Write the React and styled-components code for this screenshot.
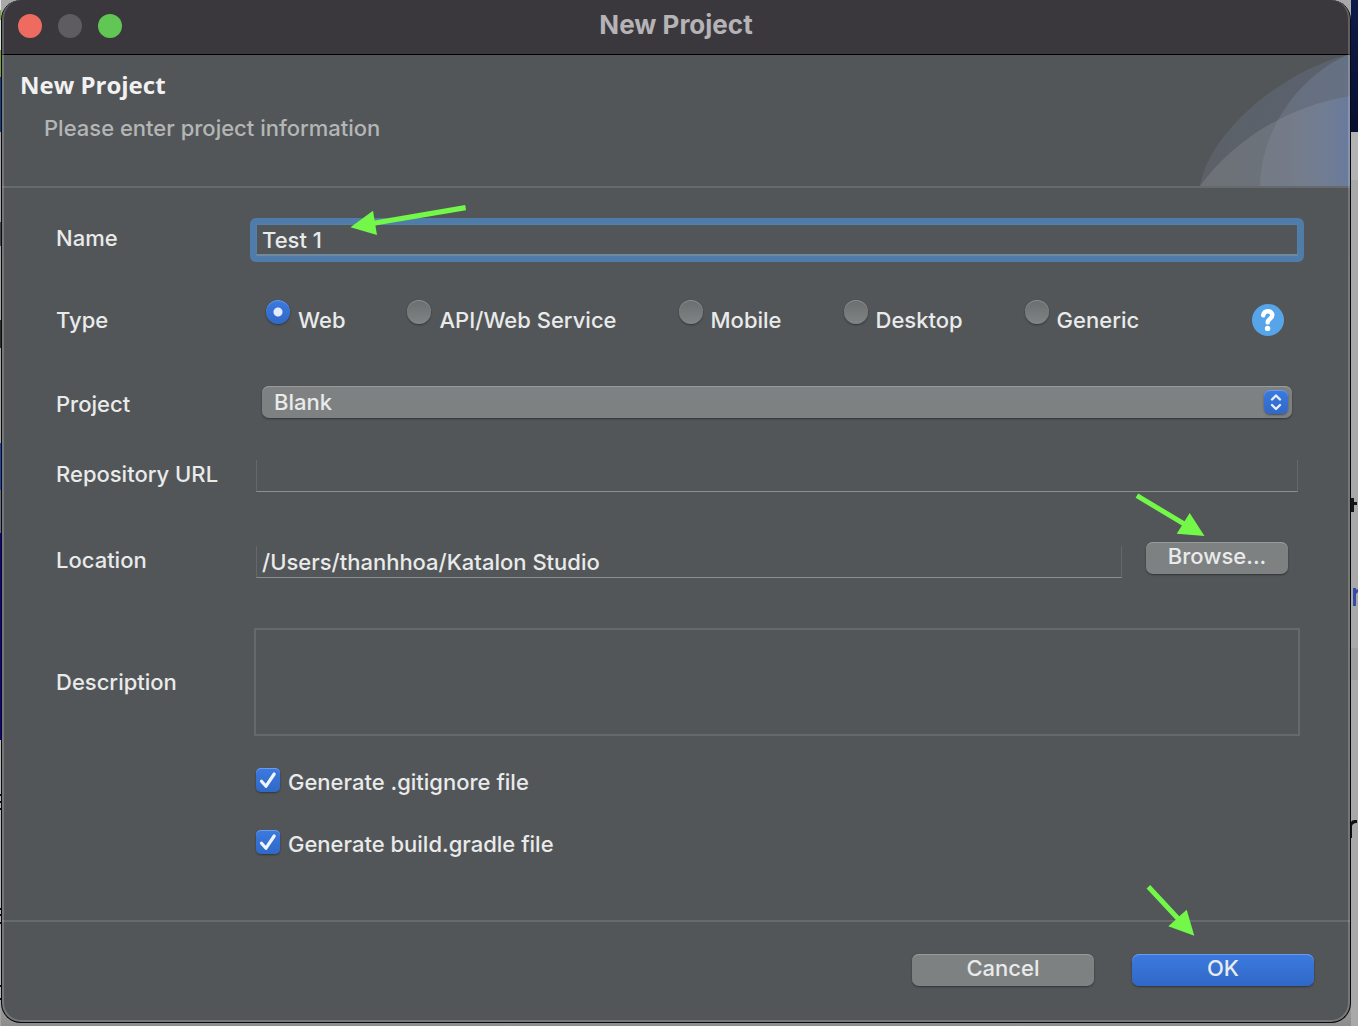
import React, { useState } from "react";
import styled, { createGlobalStyle, css } from "styled-components";

const GlobalStyle = createGlobalStyle`
  * {
    box-sizing: border-box;
  }
  body {
    margin: 0;
    background: #a4a4a4;
    font-family: Inter, "Liberation Sans", sans-serif;
    font-size: 22px;
    font-weight: 450;
    line-height: 28px;
    color: #e9eaea;
  }
  input,
  select,
  button,
  textarea {
    margin: 0;
    font: inherit;
    color: inherit;
  }
`;

const Desktop = styled.div`
  display: grid;
  grid-template-columns: 1px minmax(0, 1fr) 7px;
  min-height: 100vh;
  overflow: hidden;
  background: linear-gradient(to top, #8c8c8c, #a9a9a9 40px);
`;
const LeftEdge = styled.div`
  background: linear-gradient(
    #e4e4e4 10px,
    #78a640 10px 20px,
    #d5dcd5 20px 50px,
    #7ba03a 50px 77px,
    #14428f 77px 132px,
    #a4a4a4 132px 222px,
    #4a4a4a 222px 246px,
    #a4a4a4 246px 320px,
    #2c2c2c 320px 348px,
    #a4a4a4 348px 443px,
    #1e45b4 443px 490px,
    #666b82 490px 533px,
    #13009b 533px 740px,
    #b4b4b4 740px 794px,
    #111 794px 796px,
    #b4b4b4 796px 801px,
    #111 801px 803px,
    #b4b4b4 803px 808px,
    #111 808px 810px,
    #b4b4b4 810px 908px,
    #111 908px 910px,
    #b4b4b4 910px 914px,
    #111 914px 916px,
    #b4b4b4 916px 922px,
    #111 922px 924px,
    #b4b4b4 924px 985px,
    #111 985px 987px,
    #b4b4b4 987px 998px,
    #111 998px 1000px,
    #a4a4a4 1000px
  );
`;
const RightEdge = styled.div`
  background: linear-gradient(
    #0e1b4b,
    #080f30 132px,
    #b3b3b3 132px 180px,
    #a9a9a9 180px 648px,
    #9f9f9f 648px 680px,
    #a9a9a9 680px
  );
`;
const EdgeArt = styled.svg`
  display: block;
  width: 7px;
  height: 1000px;
`;

const Dialog = styled.main`
  position: relative;
  align-self: start;
  border: 1px solid #0a0a0a;
  border-top: 0;
  border-radius: 20px;
  overflow: hidden;
  background: #525658;
  &::after {
    content: "";
    position: absolute;
    inset: 0;
    border: 2px solid rgba(255, 255, 255, 0.2);
    border-top-width: 0;
    border-radius: 19px;
    pointer-events: none;
  }
`;

const TitleBar = styled.header`
  display: grid;
  grid-template-columns: 1fr auto 1fr;
  align-items: center;
  height: 55px;
  padding: 0 16px 3px;
  background: #3b383d;
  border-bottom: 1px solid #000;
`;
const Lights = styled.div`
  display: flex;
  gap: 16px;
`;
const Light = styled.button`
  width: 24px;
  height: 24px;
  padding: 0;
  border: 0;
  border-radius: 50%;
  background: ${(props) => props.$color};
`;
const WindowTitle = styled.div`
  padding-bottom: 2px;
  font-size: 26px;
  font-weight: 700;
  color: #b5b3b6;
`;

const Banner = styled.section`
  display: flex;
  justify-content: space-between;
  height: 133px;
  border-bottom: 2px solid #656a6c;
`;
const BannerText = styled.div`
  padding: 13px 18px;
`;
const Heading = styled.h1`
  margin: 0;
  font-family: "Open Sans", "Noto Sans", sans-serif;
  font-size: 24px;
  line-height: 34px;
  font-weight: 700;
  color: #f1f1f1;
`;
const Hint = styled.p`
  margin: 12px 0 0;
  padding-left: 24px;
  color: #b4b6b6;
`;
const BannerArt = styled.svg`
  display: block;
  width: 150px;
  height: 131px;
`;

const Form = styled.form`
  display: grid;
  grid-template-columns: 200px minmax(0, 1fr);
  grid-template-rows: 100px 64px 104px 36px 136px 108px 92px 32px;
  align-items: center;
  padding: 0 52px 60px 54px;
`;
const Label = styled.label`
  white-space: nowrap;
`;
const GroupLabel = styled.div``;

const TextInput = styled.input`
  display: block;
  flex: 1;
  min-width: 0;
  width: 100%;
  height: 32px;
  margin-top: ${(props) => (props.$focused ? 0 : 4)}px;
  padding: 0 5px;
  border: 1px solid #64686a;
  border-top: 0;
  border-bottom-color: #8b8f90;
  border-radius: 0;
  background: #525658;
  outline: none;
  ${(props) =>
    props.$focused &&
    css`
      border: 1px solid #5480a8;
      border-bottom: 2px solid #71899c;
      padding-top: 1px;
    `}
`;
const FocusRing = styled.div`
  position: relative;
  margin: 4px -6px 0;
  padding: 6px;
  border-radius: 6px;
  background: #4f7ca8;
`;

const Arrow = styled.svg`
  position: absolute;
  left: ${(props) => props.$left}px;
  bottom: ${(props) => props.$bottom}px;
  fill: #73f84a;
  pointer-events: none;
`;

const RadioRow = styled.div`
  display: flex;
  align-items: center;
  gap: 62px;
  padding: 0 14px 0 10px;
`;
const RadioLabel = styled.label`
  display: flex;
  align-items: flex-start;
  gap: 8px;
  line-height: 40px;
  white-space: nowrap;
`;
const Radio = styled.input`
  appearance: none;
  flex: none;
  width: 24px;
  height: 24px;
  border-radius: 50%;
  background: linear-gradient(#6b6e6f, #818485);
  box-shadow: inset 0 1px 0 #8a8d8e, 0 1px 2px rgba(0, 0, 0, 0.4);
  &:checked {
    background: radial-gradient(circle, #e3ebfa 4px, transparent 5px),
      linear-gradient(#3c7ae0, #3068c6);
    box-shadow: inset 0 1px 0 #6b9bea, 0 1px 2px rgba(0, 0, 0, 0.4);
  }
`;
const HelpButton = styled.button`
  flex: none;
  width: 32px;
  height: 32px;
  margin-left: auto;
  padding: 0;
  border: 0;
  border-radius: 50%;
  background: #55a5e8;
  svg {
    display: block;
  }
`;

const SelectWrap = styled.div`
  position: relative;
  margin: 0 6px 4px;
`;
const Select = styled.select`
  appearance: none;
  display: block;
  width: 100%;
  height: 32px;
  padding: 0 36px 0 12px;
  border: 0;
  border-radius: 7px;
  background: #7e8182;
  box-shadow: inset 0 1px 0 #999c9d, 0 1px 2px rgba(0, 0, 0, 0.4);
`;
const Stepper = styled.svg`
  position: absolute;
  right: 4px;
  top: 4px;
  width: 24px;
  height: 24px;
  border-radius: 6px;
  background: linear-gradient(#3c7ae0, #3068c6);
  box-shadow: inset 0 1px 0 #6b9bea, 0 1px 2px rgba(0, 0, 0, 0.4);
  pointer-events: none;
`;

const LocationRow = styled.div`
  display: flex;
  align-items: center;
  gap: 24px;
  padding-right: 10px;
`;
const ButtonWrap = styled.div`
  position: relative;
`;
const Button = styled.button`
  display: block;
  width: ${(props) => props.$width}px;
  height: 32px;
  padding: 0 0 4px;
  border: 0;
  border-radius: 7px;
  background: ${(props) =>
    props.$primary ? "linear-gradient(#3c7ae0, #3068c6)" : "#7e8182"};
  box-shadow: inset 0 1px 0 ${(props) => (props.$primary ? "#6b9bea" : "#999c9d")},
    0 1px 2px rgba(0, 0, 0, 0.4);
`;
const BrowseWrap = styled(ButtonWrap)`
  margin-bottom: 4px;
`;

const Description = styled.textarea`
  display: block;
  height: 108px;
  margin: 0 -2px;
  padding: 4px;
  border: 2px solid #65696b;
  background: transparent;
  outline: none;
  resize: none;
`;

const CheckLabel = styled.label`
  grid-column: 2;
  display: flex;
  align-items: center;
  gap: 8px;
`;
const CheckWrap = styled.span`
  position: relative;
  flex: none;
  height: 28px;
`;
const Checkbox = styled.input`
  appearance: none;
  display: block;
  width: 24px;
  height: 24px;
  border-radius: 5px;
  background: linear-gradient(#6b6e6f, #818485);
  box-shadow: inset 0 1px 0 #8a8d8e, 0 1px 2px rgba(0, 0, 0, 0.4);
  &:checked {
    background: linear-gradient(#3c7ae0, #3068c6);
    box-shadow: inset 0 1px 0 #6b9bea, 0 1px 2px rgba(0, 0, 0, 0.4);
  }
  &:not(:checked) + svg {
    display: none;
  }
`;
const Tick = styled.svg`
  position: absolute;
  left: 0;
  top: 0;
  pointer-events: none;
`;

const Footer = styled.footer`
  display: flex;
  justify-content: flex-end;
  gap: 38px;
  padding: 32px 36px 36px;
  border-top: 2px solid #656a6c;
`;

const types = ["Web", "API/Web Service", "Mobile", "Desktop", "Generic"];

const BannerCurves = () => (
  <BannerArt viewBox="0 0 150 131" aria-hidden="true">
    <defs>
      <linearGradient id="outer" x1="0" x2="1">
        <stop offset="0" stopColor="#8088a0" stopOpacity="0.22" />
        <stop offset="1" stopColor="#6f84b4" stopOpacity="0.26" />
      </linearGradient>
      <linearGradient id="inner" x1="0" x2="1">
        <stop offset="0" stopColor="#8c94a8" stopOpacity="0.24" />
        <stop offset="1" stopColor="#788ba8" stopOpacity="0.36" />
      </linearGradient>
      <linearGradient id="low" x1="0" x2="1">
        <stop offset="0" stopColor="#96999a" stopOpacity="0.3" />
        <stop offset="0.6" stopColor="#9498a2" stopOpacity="0.3" />
        <stop offset="1" stopColor="#6c80ac" stopOpacity="0.6" />
      </linearGradient>
    </defs>
    <path d="M0 131C8 82 74 19 150 -1V131Z" fill="url(#outer)" />
    <path d="M60 131C61 78 95 22 150 -1V131Z" fill="url(#inner)" />
    <path d="M0 131C30 90 80 53 150 41V131Z" fill="url(#low)" />
  </BannerArt>
);

const CheckOption = ({ text }) => {
  const [checked, setChecked] = useState(true);

  return (
    <CheckLabel>
      <CheckWrap>
        <Checkbox
          type="checkbox"
          checked={checked}
          onChange={(e) => setChecked(e.target.checked)}
        />
        <Tick width="24" height="24" viewBox="0 0 24 24" aria-hidden="true">
          <path
            d="M5.5 13.2L10 18.2L18.2 6"
            fill="none"
            stroke="#f0f4fd"
            strokeWidth="3.2"
            strokeLinecap="round"
            strokeLinejoin="round"
          />
        </Tick>
      </CheckWrap>
      {text}
    </CheckLabel>
  );
};

const App = () => {
  const [name, setName] = useState("Test 1");
  const [type, setType] = useState("Web");
  const [repository, setRepository] = useState("");
  const [location, setLocation] = useState("/Users/thanhhoa/Katalon Studio");

  return (
    <Desktop>
      <GlobalStyle />
      <LeftEdge />
      <Dialog>
        <TitleBar>
          <Lights>
            <Light type="button" aria-label="Close" $color="#ed6b5f" />
            <Light type="button" aria-label="Minimize" $color="#5f5c61" />
            <Light type="button" aria-label="Zoom" $color="#62c655" />
          </Lights>
          <WindowTitle>New Project</WindowTitle>
        </TitleBar>
        <Banner>
          <BannerText>
            <Heading>New Project</Heading>
            <Hint>Please enter project information</Hint>
          </BannerText>
          <BannerCurves />
        </Banner>
        <Form id="project" onSubmit={(e) => e.preventDefault()}>
          <Label htmlFor="name">Name</Label>
          <FocusRing>
            <TextInput
              id="name"
              $focused
              value={name}
              onChange={(e) => setName(e.target.value)}
            />
            <Arrow $left={100} $bottom={26} width="118" height="32" aria-hidden="true">
              <path d="M0.5 23.3L23 6.7L24.6 16.4L115.2 1L116 6.2L25.4 21.6L27 31Z" />
            </Arrow>
          </FocusRing>

          <GroupLabel id="type">Type</GroupLabel>
          <RadioRow role="radiogroup" aria-labelledby="type">
            {types.map((item) => (
              <RadioLabel key={item}>
                <Radio
                  type="radio"
                  name="type"
                  checked={type === item}
                  onChange={() => setType(item)}
                />
                {item}
              </RadioLabel>
            ))}
            <HelpButton type="button" aria-label="Help">
              <svg width="32" height="32" viewBox="0 0 32 32">
                <path
                  d="M11.2 11.4C11.6 8.6 13.2 7.2 15.8 7.2C18.6 7.2 20.3 8.8 20.3 11.2C20.3 14.6 15.7 14.8 15.7 18.4"
                  fill="none"
                  stroke="#fff"
                  strokeWidth="4.4"
                  strokeLinecap="round"
                />
                <circle cx="15.6" cy="24.4" r="2.7" fill="#fff" />
              </svg>
            </HelpButton>
          </RadioRow>

          <Label htmlFor="template">Project</Label>
          <SelectWrap>
            <Select id="template">
              <option>Blank</option>
            </Select>
            <Stepper viewBox="0 0 24 24" aria-hidden="true">
              <path
                d="M8 9.5L12 5.5L16 9.5M8 15L12 19L16 15"
                fill="none"
                stroke="#e8effc"
                strokeWidth="2.4"
                strokeLinecap="round"
                strokeLinejoin="round"
              />
            </Stepper>
          </SelectWrap>

          <Label htmlFor="repository">Repository URL</Label>
          <TextInput
            id="repository"
            value={repository}
            onChange={(e) => setRepository(e.target.value)}
          />

          <Label htmlFor="location">Location</Label>
          <LocationRow>
            <TextInput
              id="location"
              value={location}
              onChange={(e) => setLocation(e.target.value)}
            />
            <BrowseWrap>
              <Button type="button" $width={142}>
                Browse...
              </Button>
              <Arrow $left={-12} $bottom={36} width="72" height="46" aria-hidden="true">
                <path d="M4.2 1.6L50.5 29.2L55.7 21L70.5 44L42.7 41.7L47.9 33.5L1.6 5.8Z" />
              </Arrow>
            </BrowseWrap>
          </LocationRow>

          <Label htmlFor="description">Description</Label>
          <Description id="description" />

          <CheckOption text="Generate .gitignore file" />
          <CheckOption text="Generate build.gradle file" />
        </Form>
        <Footer>
          <Button type="button" $width={182}>
            Cancel
          </Button>
          <ButtonWrap>
            <Button type="submit" form="project" $width={182} $primary>
              OK
            </Button>
            <Arrow $left={12} $bottom={48} width="52" height="54" aria-hidden="true">
              <path d="M6.2 1L35.3 32.3L42.7 25.7L50.3 51.7L24.3 42.3L31.7 35.7L2.6 4.6Z" />
            </Arrow>
          </ButtonWrap>
        </Footer>
      </Dialog>
      <RightEdge>
        <EdgeArt viewBox="0 0 7 1000" aria-hidden="true">
          <path d="M0 498H3V502H6V505H3V512H0Z" fill="#151515" />
          <path d="M2 588H5V590L7 589V592L5 594V606H2Z" fill="#3449a8" />
          <path d="M0 822C1 820 3 820 6 820V823C3 823 1 824 1 827V838H0Z" fill="#111" />
        </EdgeArt>
      </RightEdge>
    </Desktop>
  );
};

export default App;
